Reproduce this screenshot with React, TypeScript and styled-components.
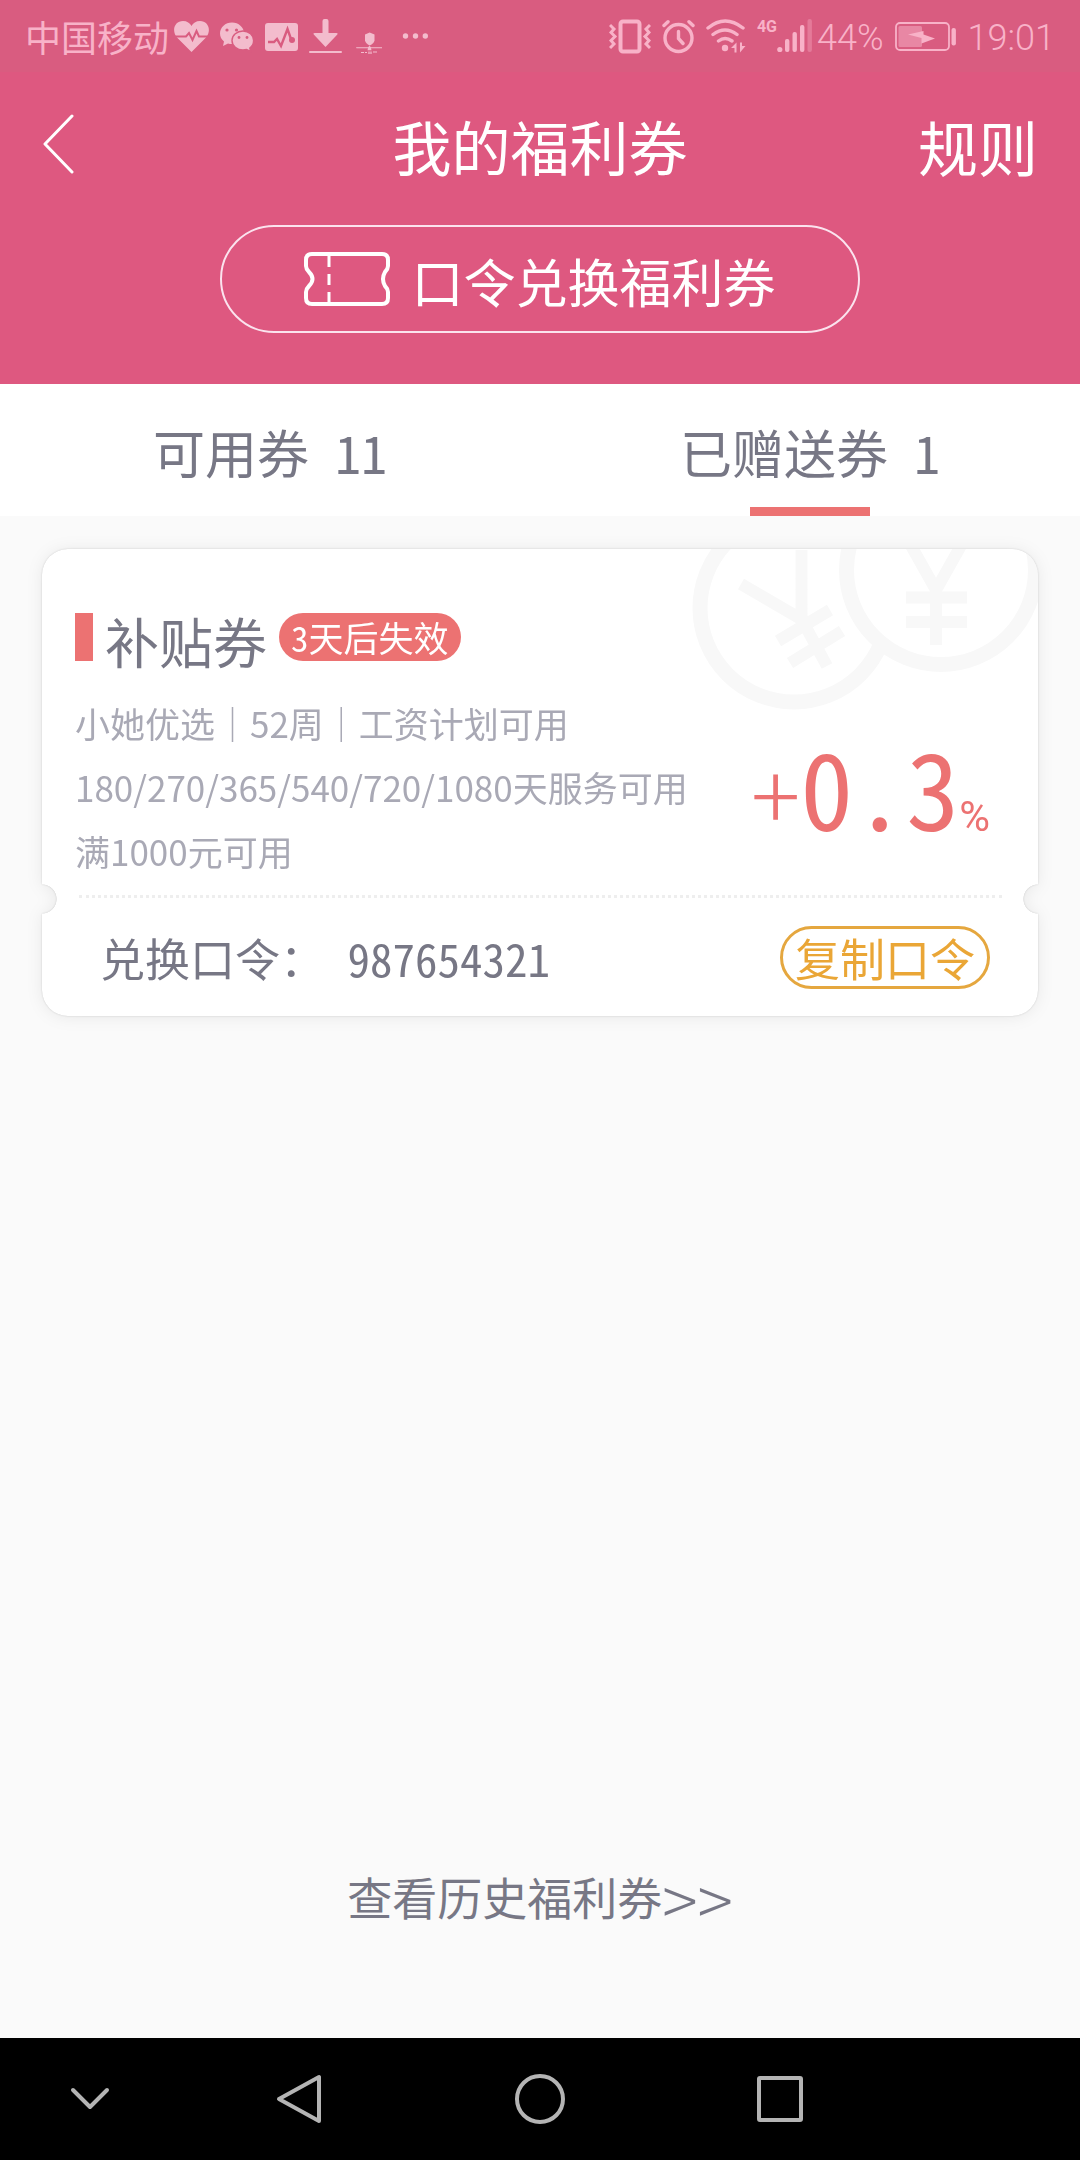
import React, { useState } from "react";
import styled, { createGlobalStyle } from "styled-components";

const GlobalStyle = createGlobalStyle`
  * { box-sizing: border-box; }
  body {
    margin: 0;
    background: #fafafa;
    font-family: "Noto Sans CJK SC", "Liberation Sans", sans-serif;
    font-feature-settings: "hwid";
    color: #777785;
  }
  button {
    font: inherit;
    font-feature-settings: inherit;
    color: inherit;
    background: none;
    border: 0;
    padding: 0;
    cursor: pointer;
  }
`;

const Screen = styled.div`
  min-height: 100vh;
  display: flex;
  flex-direction: column;
`;

const StatusBar = styled.div`
  height: 72px;
  padding: 0 25px;
  background: #d95c80;
  color: #f8b2c8;
  display: flex;
  align-items: center;
  justify-content: space-between;
  line-height: 36px;
`;

const StatusGroup = styled.div`
  display: flex;
  align-items: center;
  gap: 11px;
`;

const Carrier = styled.span`
  font-size: 36px;
  margin-right: -6px;
`;

const StatusText = styled.span`
  padding-top: 4px;
  font-family: Roboto, sans-serif;
  font-feature-settings: normal;
  font-size: 36px;
  font-weight: 300;
`;

const Signal = styled.div`
  display: flex;
  align-items: flex-start;
  margin-right: -6px;
`;

const NetworkType = styled.span`
  font-family: Roboto, sans-serif;
  font-feature-settings: normal;
  font-size: 16px;
  font-weight: 700;
  line-height: 18px;
`;

const Header = styled.header`
  background: #de5880;
  color: #fff;
  padding-bottom: 51px;
  display: flex;
  flex-direction: column;
  align-items: center;
`;

const TitleRow = styled.div`
  align-self: stretch;
  height: 147px;
  margin-bottom: 6px;
  padding: 0 42px;
  display: grid;
  grid-template-columns: 1fr auto 1fr;
  align-items: center;
`;

const Title = styled.h1`
  margin: 0;
  font-size: 59px;
  font-weight: 400;
  line-height: 72px;
`;

const BackButton = styled.button`
  justify-self: start;
  display: flex;
  padding-bottom: 4px;
`;

const RulesButton = styled.button`
  justify-self: end;
  font-size: 60px;
  line-height: 72px;
`;

const RedeemButton = styled.button`
  width: 59.3%;
  height: 108px;
  border: 2px solid #fbe3ee;
  border-radius: 54px;
  display: flex;
  align-items: center;
  justify-content: center;
  gap: 21px;
  font-size: 52px;
  line-height: 64px;
`;

const RedeemLabel = styled.span`
  padding-top: 4px;
`;

const Tabs = styled.div`
  display: flex;
  background: #fff;
`;

const Tab = styled.button<{ $active: boolean }>`
  position: relative;
  flex: 1;
  height: 132px;
  padding-top: 4px;
  font-size: 52px;
  line-height: 64px;

  &::after {
    content: "";
    display: ${(p) => (p.$active ? "block" : "none")};
    position: absolute;
    left: 50%;
    bottom: 0;
    width: 120px;
    height: 9px;
    margin-left: -60px;
    background: #ec7272;
  }
`;

const Main = styled.main`
  flex: 1;
  display: flex;
  flex-direction: column;
  justify-content: space-between;
  padding: 33px 42px 109px;
`;

const CardShadow = styled.div`
  filter: drop-shadow(0 0 1px rgba(0, 0, 0, 0.14)) drop-shadow(0 1px 8px rgba(0, 0, 0, 0.07));
`;

const Card = styled.article`
  position: relative;
  overflow: hidden;
  background: #fff;
  border-radius: 26px;
  mask-image:
    radial-gradient(circle 15px at 0 calc(100% - 117px), transparent 96%, #000),
    radial-gradient(circle 15px at 100% calc(100% - 117px), transparent 96%, #000);
  mask-composite: intersect;
`;

const Watermark = styled.svg`
  position: absolute;
  top: 0;
  right: 0;
`;

const CardTop = styled.div`
  position: relative;
  padding: 64px 48px 12px 33px;
`;

const CouponTitle = styled.div`
  display: flex;
  align-items: flex-start;
  gap: 12px;
  margin-bottom: 22px;
`;

const Marker = styled.span`
  width: 18px;
  height: 48px;
  background: #ec7272;
`;

const CouponName = styled.h2`
  margin: 0;
  font-size: 54px;
  font-weight: 400;
  line-height: 56px;
`;

const ExpiryBadge = styled.span`
  height: 48px;
  padding: 0 12px;
  border-radius: 24px;
  background: #ec7272;
  color: #fff;
  font-size: 35px;
  line-height: 48px;
`;

const CouponBody = styled.div`
  display: flex;
  align-items: center;
  justify-content: space-between;
`;

const Terms = styled.div`
  color: #a9a9b5;
  font-size: 35px;
  line-height: 64px;
`;

const Term = styled.p`
  margin: 0;
  white-space: nowrap;
  font-feature-settings: normal;
`;

const Rate = styled.div`
  display: flex;
  align-items: baseline;
  padding-top: 28px;
  color: #ec7272;
  line-height: 104px;
`;

const RateSign = styled.span`
  font-size: 92px;
  font-weight: 300;
  font-feature-settings: normal;
`;

const RateValue = styled.span`
  font-size: 106px;
`;

const RateUnit = styled.span`
  font-family: Roboto, sans-serif;
  font-feature-settings: normal;
  font-size: 42px;
`;

const Perforation = styled.div`
  margin: 0 36px 0 37px;
  border-top: 3px dotted #eeeeee;
`;

const CodeRow = styled.div`
  height: 118px;
  padding: 0 48px 0 58px;
  display: flex;
  align-items: center;
  justify-content: space-between;
  font-size: 45px;
  line-height: 58px;
`;

const RedeemCode = styled.span`
  padding-top: 2px;
`;

const CopyButton = styled.button`
  height: 63px;
  padding: 2px 12px 0;
  border: 3px solid #e5a73f;
  border-radius: 32px;
  color: #eaa636;
  line-height: 54px;
`;

const HistoryLink = styled.a`
  align-self: center;
  display: flex;
  align-items: center;
  color: inherit;
  text-decoration: none;
  font-size: 45px;
  line-height: 64px;
`;

const HistoryArrows = styled.span`
  font-feature-settings: normal;
  font-size: 66px;
  font-weight: 300;
`;

const NavBar = styled.nav`
  height: 122px;
  background: #000;
  display: grid;
  grid-template-columns: 3fr 4fr 4fr 4fr 3fr;
`;

const NavButton = styled.button`
  display: flex;
  align-items: center;
  justify-content: center;
`;

const NavIcon = ({ children }: { children: React.ReactNode }) => (
  <svg width="54" height="54" viewBox="0 0 54 54" fill="none" stroke="#b4b4b4" strokeWidth="4" strokeLinejoin="round" strokeLinecap="round">
    {children}
  </svg>
);

const NotificationIcons = () => (
  <>
    <svg width="35" height="36" viewBox="173 18 35 36">
      <path d="M190.500 52L176 37.500C170 30 174 21 182 21C186 21 189 23 190.500 26C192 23 195 21 199 21C207 21 211 30 205 37.500Z" fill="#f3bccd" />
      <path d="M173 36.500H185L188 33L191.500 40L195.500 31L198 36.500H208" fill="none" stroke="#d95c80" strokeWidth="2" />
    </svg>
    <svg width="34" height="36" viewBox="219 18 34 36" fill="#f3bccd">
      <path d="M231 22.500c-6.600 0-12 4.800-12 11c0 3.300 1.500 6 4 8l-1 4.500l5-2.500c1.300.4 2.700.6 4 .6c6.600 0 12-4.800 12-10.800s-5.400-10.800-12-10.800Z" />
      <path d="M242 31c-6 0-11 4.300-11 9.500S236 50 242 50c1.200 0 2.500-.2 3.600-.5l4 2l-.8-3.500c2.400-1.800 3.800-4.500 3.800-7.500c0-5.200-4.700-9.500-10.600-9.500Z" stroke="#d95c80" strokeWidth="1.400" />
      <g fill="#d95c80"><circle cx="226" cy="30" r="1.600" /><circle cx="235.500" cy="30" r="1.600" /><circle cx="238" cy="37.500" r="1.400" /><circle cx="246" cy="37.500" r="1.400" /></g>
    </svg>
    <svg width="33" height="36" viewBox="264 18 33 36">
      <rect x="264" y="23" width="33" height="28" rx="3" fill="#f3bccd" />
      <path d="M267 42H273L276 39L280 46L286.500 29L290 39" fill="none" stroke="#d95c80" strokeWidth="2.400" />
      <circle cx="291" cy="40" r="3" fill="#d95c80" />
    </svg>
    <svg width="33" height="36" viewBox="309 18 33 36" fill="#f3bccd">
      <path d="M322.500 21q0-2 2-2h2q2 0 2 2v12h8q2 0 .6 1.800L325.500 47L314 34.800q-1.500-1.800.6-1.800h7.900Z" />
      <rect x="309" y="51" width="33" height="2" rx="1" />
    </svg>
    <svg width="30" height="36" viewBox="354 18 30 36" fill="#f3bccd">
      <path d="M366 34.500l4.700-2l4.800 2v6q-.6 3-4.800 5q-4-2-4.700-5Z" />
      <path d="M357 47.200h12l1.500-1.500l1.500 1.500h11v1h-11l.5 2h-4l.5-2h-11.500Z" />
      <path d="M362 52.500h3m1 0h2m2-1v2.500m2-2.500v2.500m2-2h4" fill="none" stroke="#f3bccd" strokeWidth="1.200" />
    </svg>
    <svg width="34" height="36" viewBox="394 18 34 36" fill="#f3bccd">
      <circle cx="405.500" cy="36" r="2.700" /><circle cx="415.500" cy="36" r="2.700" /><circle cx="425.300" cy="36" r="2.700" />
    </svg>
  </>
);

const SystemIcons = () => (
  <>
    <svg width="42" height="36" viewBox="614 18 42 36" fill="none" stroke="#f8b2c8" strokeWidth="3">
      <rect x="625.500" y="21.500" width="19" height="30" rx="2.500" strokeWidth="4" />
      <path d="M615 25l4 4l-3 3.500l4 4l-4 4l3 3.500l-4 4M655 25l-4 4l3 3.500l-4 4l4 4l-3 3.500l4 4" />
    </svg>
    <svg width="33" height="36" viewBox="668 18 33 36" fill="none" stroke="#f8b2c8" strokeWidth="3.400" strokeLinecap="round">
      <circle cx="684.500" cy="38" r="13.500" />
      <path d="M684.500 31.500V38.500L689 43.500M670 25.500L674 21.700M699 25.500L695 21.700" />
    </svg>
    <svg width="40" height="36" viewBox="711 18 40 36" fill="none" stroke="#f8b2c8" strokeWidth="3.400" strokeLinecap="round">
      <path d="M713 28Q730 14 748 28M718 34.500Q730 25.500 742 34.500M723.500 41Q730 36 737 41" />
      <circle cx="730" cy="48" r="3.200" fill="#f8b2c8" stroke="none" />
      <path d="M736 48l5.500-5.500v10h-2v-4.500ZM750.500 46l-5.500 6.500v-10h2v3.500Z" fill="#f8b2c8" stroke="none" />
    </svg>
  </>
);

const SignalBars = () => (
  <svg width="35" height="36" viewBox="778 18 35 36" fill="#f8b2c8">
    <circle cx="780.800" cy="49.500" r="2.600" />
    <rect x="786" y="39" width="4.400" height="13" rx="2" />
    <rect x="793.500" y="32" width="4.400" height="20" rx="2" />
    <rect x="801" y="25" width="4.400" height="27" rx="2" />
    <rect x="808.500" y="19" width="4.400" height="33" rx="2" opacity="0.35" />
  </svg>
);

const Battery = () => (
  <svg width="62" height="36" viewBox="895 18 62 36" fill="#f8b2c8">
    <rect x="896" y="23" width="53" height="27" rx="4" fill="none" stroke="#f8b2c8" strokeWidth="1.800" />
    <rect x="898.500" y="26" width="23.500" height="21" rx="1.500" opacity="0.5" />
    <path d="M908 34.500L923.500 31V34.500L935 38.500L921.500 43.500V38Z" />
    <rect x="951.500" y="28" width="4.400" height="17.500" rx="2" />
  </svg>
);

const CoinWatermark = () => (
  <Watermark width="346" height="168" viewBox="692 549 346 168" fill="none" stroke="#f8f8f8" aria-hidden="true">
    <circle cx="794" cy="608" r="94" strokeWidth="15" />
    <path d="M741 584L801 619M801.500 550V619L827 666M778 641L830 610M790 663L842 631" strokeWidth="12" />
    <circle cx="941" cy="570" r="94.500" strokeWidth="15" fill="#fff" />
    <path d="M909 542L936 590L963 542M936 586V645M906 597.500H967M906 622H967" strokeWidth="12" />
  </Watermark>
);

const terms = [
  "小她优选｜52周｜工资计划可用",
  "180/270/365/540/720/1080天服务可用",
  "满1000元可用",
];

const tabs = [
  { label: "可用券", count: 11 },
  { label: "已赠送券", count: 1 },
];

export default function App() {
  const [active, setActive] = useState(1);

  return (
    <Screen>
      <GlobalStyle />
      <StatusBar>
        <StatusGroup>
          <Carrier>中国移动</Carrier>
          <NotificationIcons />
        </StatusGroup>
        <StatusGroup>
          <SystemIcons />
          <Signal>
            <NetworkType>4G</NetworkType>
            <SignalBars />
          </Signal>
          <StatusText>44%</StatusText>
          <Battery />
          <StatusText>19:01</StatusText>
        </StatusGroup>
      </StatusBar>

      <Header>
        <TitleRow>
          <BackButton aria-label="返回">
            <svg width="32" height="60" viewBox="0 0 32 60" fill="none" stroke="#fff" strokeWidth="3" strokeLinecap="round" strokeLinejoin="round">
              <path d="M30 2L3 30L30 58" />
            </svg>
          </BackButton>
          <Title>我的福利券</Title>
          <RulesButton>规则</RulesButton>
        </TitleRow>
        <RedeemButton>
          <svg width="86" height="54" viewBox="0 0 86 54" fill="none" stroke="#fff" strokeWidth="4">
            <path d="M8 2H78Q84 2 84 8V14Q84 17 81 20Q77 27 81 34Q84 37 84 40V46Q84 52 78 52H8Q2 52 2 46V40Q2 37 5 34Q12 27 5 20Q2 17 2 14V8Q2 2 8 2Z" />
            <path d="M25 3V15M25 22V33M25 40V51" strokeWidth="3" />
          </svg>
          <RedeemLabel>口令兑换福利券</RedeemLabel>
        </RedeemButton>
      </Header>

      <Tabs role="tablist">
        {tabs.map((tab, i) => (
          <Tab key={tab.label} role="tab" aria-selected={active === i} $active={active === i} onClick={() => setActive(i)}>
            {tab.label} {tab.count}
          </Tab>
        ))}
      </Tabs>

      <Main>
        <CardShadow>
          <Card>
            <CoinWatermark />
            <CardTop>
              <CouponTitle>
                <Marker />
                <CouponName>补贴券</CouponName>
                <ExpiryBadge>3天后失效</ExpiryBadge>
              </CouponTitle>
              <CouponBody>
                <Terms>
                  {terms.map((term) => (
                    <Term key={term}>{term}</Term>
                  ))}
                </Terms>
                <Rate>
                  <RateSign>+</RateSign>
                  <RateValue>0.3</RateValue>
                  <RateUnit>%</RateUnit>
                </Rate>
              </CouponBody>
            </CardTop>
            <Perforation />
            <CodeRow>
              <RedeemCode>兑换口令： 987654321</RedeemCode>
              <CopyButton>复制口令</CopyButton>
            </CodeRow>
          </Card>
        </CardShadow>
        <HistoryLink href="#history">
          查看历史福利券<HistoryArrows>&gt;&gt;</HistoryArrows>
        </HistoryLink>
      </Main>

      <NavBar>
        <NavButton aria-label="收起">
          <NavIcon><path d="M10 18L27 35L44 18" /></NavIcon>
        </NavButton>
        <NavButton aria-label="后退">
          <NavIcon><path d="M46 5V49L6 27Z" /></NavIcon>
        </NavButton>
        <NavButton aria-label="主页">
          <NavIcon><circle cx="27" cy="27" r="23" /></NavIcon>
        </NavButton>
        <NavButton aria-label="最近任务">
          <NavIcon><rect x="6" y="6" width="42" height="42" rx="1" /></NavIcon>
        </NavButton>
      </NavBar>
    </Screen>
  );
}
